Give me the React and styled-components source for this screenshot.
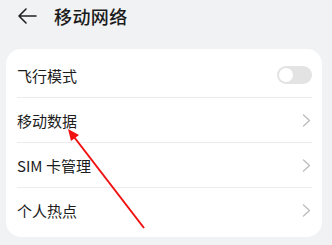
import React from 'react';
import styled, { createGlobalStyle } from 'styled-components';

const GlobalStyle = createGlobalStyle`
  html, body {
    margin: 0;
    padding: 0;
    background: #f1f2f4;
  }
  body {
    font-family: "Noto Sans", "Noto Sans CJK SC", sans-serif;
  }
`;

const Page = styled.div`
  position: relative;
  width: 332px;
  height: 245px;
  overflow: hidden;
  background: #f1f2f4;
`;

const Header = styled.div`
  display: flex;
  align-items: center;
  height: 31px;
  padding-left: 17px;
  gap: 17px;
`;

const Title = styled.div`
  font-size: 18px;
  color: #1b1b1b;
  font-family: "Noto Sans CJK SC", sans-serif;
  letter-spacing: 0.4px;
  font-weight: 500;
`;

const Card = styled.div`
  margin: 18px 10px 0 6px;
  background: #fff;
  border-radius: 15px;
  padding: 4px 10px 4px 11px;
`;

const Row = styled.div`
  display: flex;
  align-items: center;
  justify-content: space-between;
  height: 45px;
  border-bottom: ${p => (p.$last ? 'none' : '1px solid #ececec')};
  box-sizing: border-box;
`;

const Label = styled.div`
  font-size: 15px;
  color: #1c1c1c;
  font-family: "Noto Sans CJK SC", sans-serif;
`;

const Toggle = styled.div`
  width: 35px;
  height: 18px;
  border-radius: 9px;
  background: #e3e3e3;
  display: flex;
  align-items: center;
  padding: 0 2px;
  box-sizing: border-box;
  &::before {
    content: '';
    width: 14px;
    height: 14px;
    border-radius: 50%;
    background: #fff;
  }
`;

const Overlay = styled.svg`
  position: absolute;
  left: 0;
  top: 0;
  pointer-events: none;
`;

const BackIcon = () => (
  <svg width="20" height="16" viewBox="0 0 20 16" fill="none">
    <path d="M9 1L2 8l7 7M2 8h17" stroke="#222" strokeWidth="1.6" strokeLinecap="round" strokeLinejoin="round" />
  </svg>
);

const Chevron = () => (
  <svg width="9" height="13" viewBox="0 0 9 13" fill="none" style={{ marginRight: 1 }}>
    <path d="M1.5 1l6 5.5-6 5.5" stroke="#bcbcbc" strokeWidth="1.3" strokeLinecap="round" strokeLinejoin="round" />
  </svg>
);

const rows = [
  { label: '飞行模式', toggle: true },
  { label: '移动数据' },
  { label: 'SIM 卡管理' },
  { label: '个人热点' },
];

export default function App() {
  return (
    <Page>
      <GlobalStyle />
      <Header>
        <BackIcon />
        <Title>移动网络</Title>
      </Header>
      <Card>
        {rows.map((r, i) => (
          <Row key={r.label} $last={i === rows.length - 1}>
            <Label>{r.label}</Label>
            {r.toggle ? <Toggle /> : <Chevron />}
          </Row>
        ))}
      </Card>
      <Overlay width="332" height="245" viewBox="0 0 332 245">
        <line x1="144" y1="228" x2="71" y2="133" stroke="#f01010" strokeWidth="2" />
        <polygon points="68,129 79,135 71,141" fill="#f01010" />
      </Overlay>
    </Page>
  );
}
